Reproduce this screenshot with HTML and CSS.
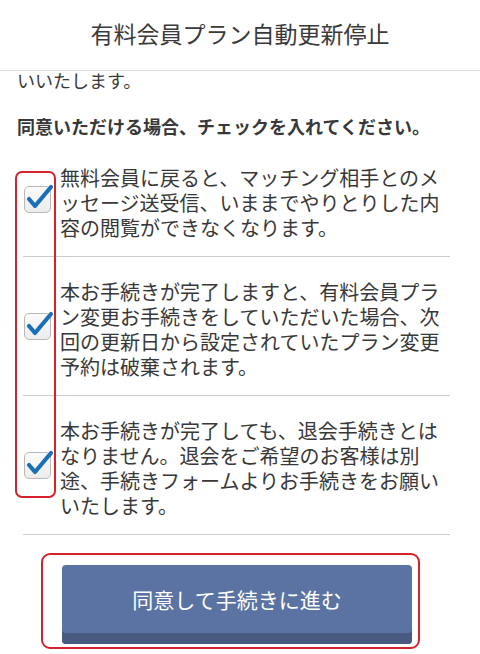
FILE: index.html
```html
<!DOCTYPE html>
<html lang="ja">
<head>
<meta charset="utf-8">
<title>有料会員プラン自動更新停止</title>
<link rel="stylesheet" href="styles.css">
</head>
<body>
<header class="header">有料会員プラン自動更新停止</header>
<main class="content">
  <p class="lead">いいたします。</p>
  <p class="notice">同意いただける場合、チェックを入れてください。</p>
  <ul class="checks">
    <li class="item">
      <span class="box-col"><span class="checkbox"><svg class="tick" viewBox="0 0 34 30" width="34" height="30"><path d="M5 15 L11 22 L27 3" fill="none" stroke="#1b6fb6" stroke-width="4.2" stroke-linecap="round" stroke-linejoin="round"/></svg></span></span>
      <span class="text">無料会員に戻ると、マッチング相手とのメッセージ送受信、いままでやりとりした内容の閲覧ができなくなります。</span>
    </li>
    <li class="item">
      <span class="box-col"><span class="checkbox"><svg class="tick" viewBox="0 0 34 30" width="34" height="30"><path d="M5 15 L11 22 L27 3" fill="none" stroke="#1b6fb6" stroke-width="4.2" stroke-linecap="round" stroke-linejoin="round"/></svg></span></span>
      <span class="text">本お手続きが完了しますと、有料会員プラン変更お手続きをしていただいた場合、次回の更新日から設定されていたプラン変更予約は破棄されます。</span>
    </li>
    <li class="item">
      <span class="box-col"><span class="checkbox"><svg class="tick" viewBox="0 0 34 30" width="34" height="30"><path d="M5 15 L11 22 L27 3" fill="none" stroke="#1b6fb6" stroke-width="4.2" stroke-linecap="round" stroke-linejoin="round"/></svg></span></span>
      <span class="text">本お手続きが完了しても、退会手続きとはなりません。退会をご希望のお客様は別途、手続きフォームよりお手続きをお願いいたします。</span>
    </li>
    <li class="mark-checks" aria-hidden="true"></li>
  </ul>
  <div class="button-mark">
    <button class="agree" type="button">同意して手続きに進む</button>
  </div>
</main>
</body>
</html>
```
FILE: styles.css
```css
* { box-sizing: border-box; }
html, body {
  margin: 0;
  padding: 0;
}
body {
  width: 480px;
  height: 654px;
  overflow: hidden;
  background: #ffffff;
  color: #383838;
  font-family: "Noto Sans CJK JP", "Noto Sans", sans-serif;
}
.header {
  height: 71px;
  border-bottom: 1px solid #dedede;
  display: flex;
  align-items: center;
  justify-content: center;
  font-size: 23px;
  color: #3a3a3a;
  padding-bottom: 4px;
}
.content {
  padding: 0 17px;
}
.lead {
  margin: 0;
  font-size: 18px;
  line-height: 18px;
}
.notice {
  margin: 25px 0 0;
  font-size: 18px;
  line-height: 24px;
  font-weight: bold;
  padding-bottom: 1px;
}
.checks {
  list-style: none;
  margin: 4px 13px 0 6px;
  padding: 0;
  position: relative;
}
.item {
  display: flex;
  align-items: center;
  border-bottom: 1px solid #cccccc;
}
.box-col {
  flex: none;
  width: 37px;
  display: flex;
  align-items: center;
}
.checkbox {
  position: relative;
  margin-left: 1px;
  width: 27px;
  height: 27px;
  border: 1px solid #b8b8b8;
  border-radius: 5px;
  background: linear-gradient(#fbfbfb, #ececec);
}
.tick {
  position: absolute;
  left: -1px;
  top: -3px;
}
.text {
  flex: 1;
  padding: 22px 0 16px;
  font-size: 20px;
  line-height: 25px;
  line-break: loose;
}
.mark-checks {
  position: absolute;
  left: -8px;
  top: 28px;
  width: 41px;
  height: 327px;
  border: 2px solid #d4232c;
  border-radius: 7px;
  pointer-events: none;
}
.button-mark {
  margin: 18px 0 0 24px;
  width: 379px;
  border: 2px solid #d4232c;
  border-radius: 9px;
  padding: 10px 6px 3px 19px;
}
.agree {
  display: flex;
  align-items: center;
  justify-content: center;
  width: 100%;
  height: 79px;
  padding: 0 0 12px;
  border: none;
  border-radius: 4px;
  background: #5a73a3;
  box-shadow: inset 0 -11px 0 #485a80;
  color: #ffffff;
  font-family: "Noto Sans CJK JP", "Noto Sans", sans-serif;
  font-size: 21px;
}
```
